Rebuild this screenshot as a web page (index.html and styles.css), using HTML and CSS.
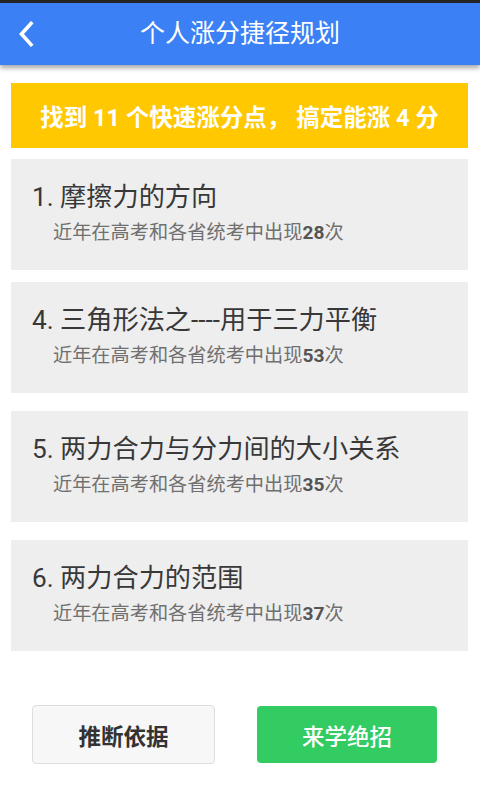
FILE: index.html
```html
<!DOCTYPE html>
<html lang="zh-CN">
<head>
<meta charset="utf-8">
<title>个人涨分捷径规划</title>
<link rel="stylesheet" href="styles.css">
</head>
<body>
<div class="statusbar"></div>
<header class="appbar">
  <div class="back">
    <svg width="16" height="26" viewBox="0 0 16 26"><polyline points="13,2.5 3.5,13 13,23.5" fill="none" stroke="#fff" stroke-width="3.6" stroke-linecap="square" stroke-linejoin="miter"/></svg>
  </div>
  <h1 class="title">个人涨分捷径规划</h1>
  <div class="spacer"></div>
</header>
<main class="content">
  <div class="banner">找到 11 个快速涨分点， 搞定能涨 4 分</div>
  <ul class="list">
    <li class="card">
      <div class="card-title">1. 摩擦力的方向</div>
      <div class="card-sub">近年在高考和各省统考中出现<b>28</b>次</div>
    </li>
    <li class="card">
      <div class="card-title">4. 三角形法之----用于三力平衡</div>
      <div class="card-sub">近年在高考和各省统考中出现<b>53</b>次</div>
    </li>
    <li class="card card-wide">
      <div class="card-title">5. 两力合力与分力间的大小关系</div>
      <div class="card-sub">近年在高考和各省统考中出现<b>35</b>次</div>
    </li>
    <li class="card card-wide">
      <div class="card-title">6. 两力合力的范围</div>
      <div class="card-sub">近年在高考和各省统考中出现<b>37</b>次</div>
    </li>
  </ul>
  <div class="actions">
    <button class="btn btn-light">推断依据</button>
    <button class="btn btn-green">来学绝招</button>
  </div>
</main>
</body>
</html>
```
FILE: styles.css
```css
* { box-sizing: border-box; }
html, body { margin: 0; padding: 0; background: #fff; }
body {
  width: 480px;
  height: 800px;
  overflow: hidden;
  font-family: Roboto, "Noto Sans CJK SC", "Noto Sans", sans-serif;
}
.statusbar { height: 3px; background: #262626; }
.appbar {
  height: 62px;
  background: #3b81f5;
  display: grid;
  grid-template-columns: 1fr auto 1fr;
  align-items: center;
  box-shadow: 0 3px 5px rgba(0,0,0,0.35);
  position: relative;
  z-index: 1;
}
.back { padding-left: 18px; display: flex; align-items: center; }
.back svg { display: block; }
.title {
  margin: 0;
  color: #fff;
  font-size: 25px;
  font-weight: 400;
  line-height: 30px;
}
.content { padding: 18px 12px 0 11px; }
.banner {
  height: 65px;
  background: #ffc800;
  color: #fff;
  font-weight: 700;
  font-size: 23.5px;
  display: flex;
  align-items: center;
  justify-content: center;
  white-space: pre;
}
.list { list-style: none; margin: 11px 0 0; padding: 0; }
.card {
  height: 111px;
  background: #eeeeee;
  padding: 23px 0 0 21px;
}
.card + .card { margin-top: 12px; }
.card + .card-wide { margin-top: 18px; }
.card-title {
  font-size: 26.2px;
  line-height: 30px;
  color: #383838;
}
.card-sub {
  margin-top: 8px;
  padding-left: 21px;
  font-size: 19.2px;
  line-height: 26px;
  color: #707070;
}
.card-sub b { color: #555; font-weight: 700; }
.actions {
  margin-top: 54px;
  display: flex;
  padding-left: 21px;
  gap: 42px;
  align-items: center;
}
.btn {
  font-family: inherit;
  font-size: 22.5px;
  border-radius: 4px;
  height: 59px;
  padding: 0;
  cursor: pointer;
}
.btn-light {
  width: 183px;
  background: #f7f7f7;
  border: 1px solid #dddddd;
  color: #333;
  font-weight: 700;
}
.btn-green {
  width: 180px;
  height: 57px;
  background: #33cc62;
  border: none;
  color: #fff;
  font-weight: 500;
}
```
